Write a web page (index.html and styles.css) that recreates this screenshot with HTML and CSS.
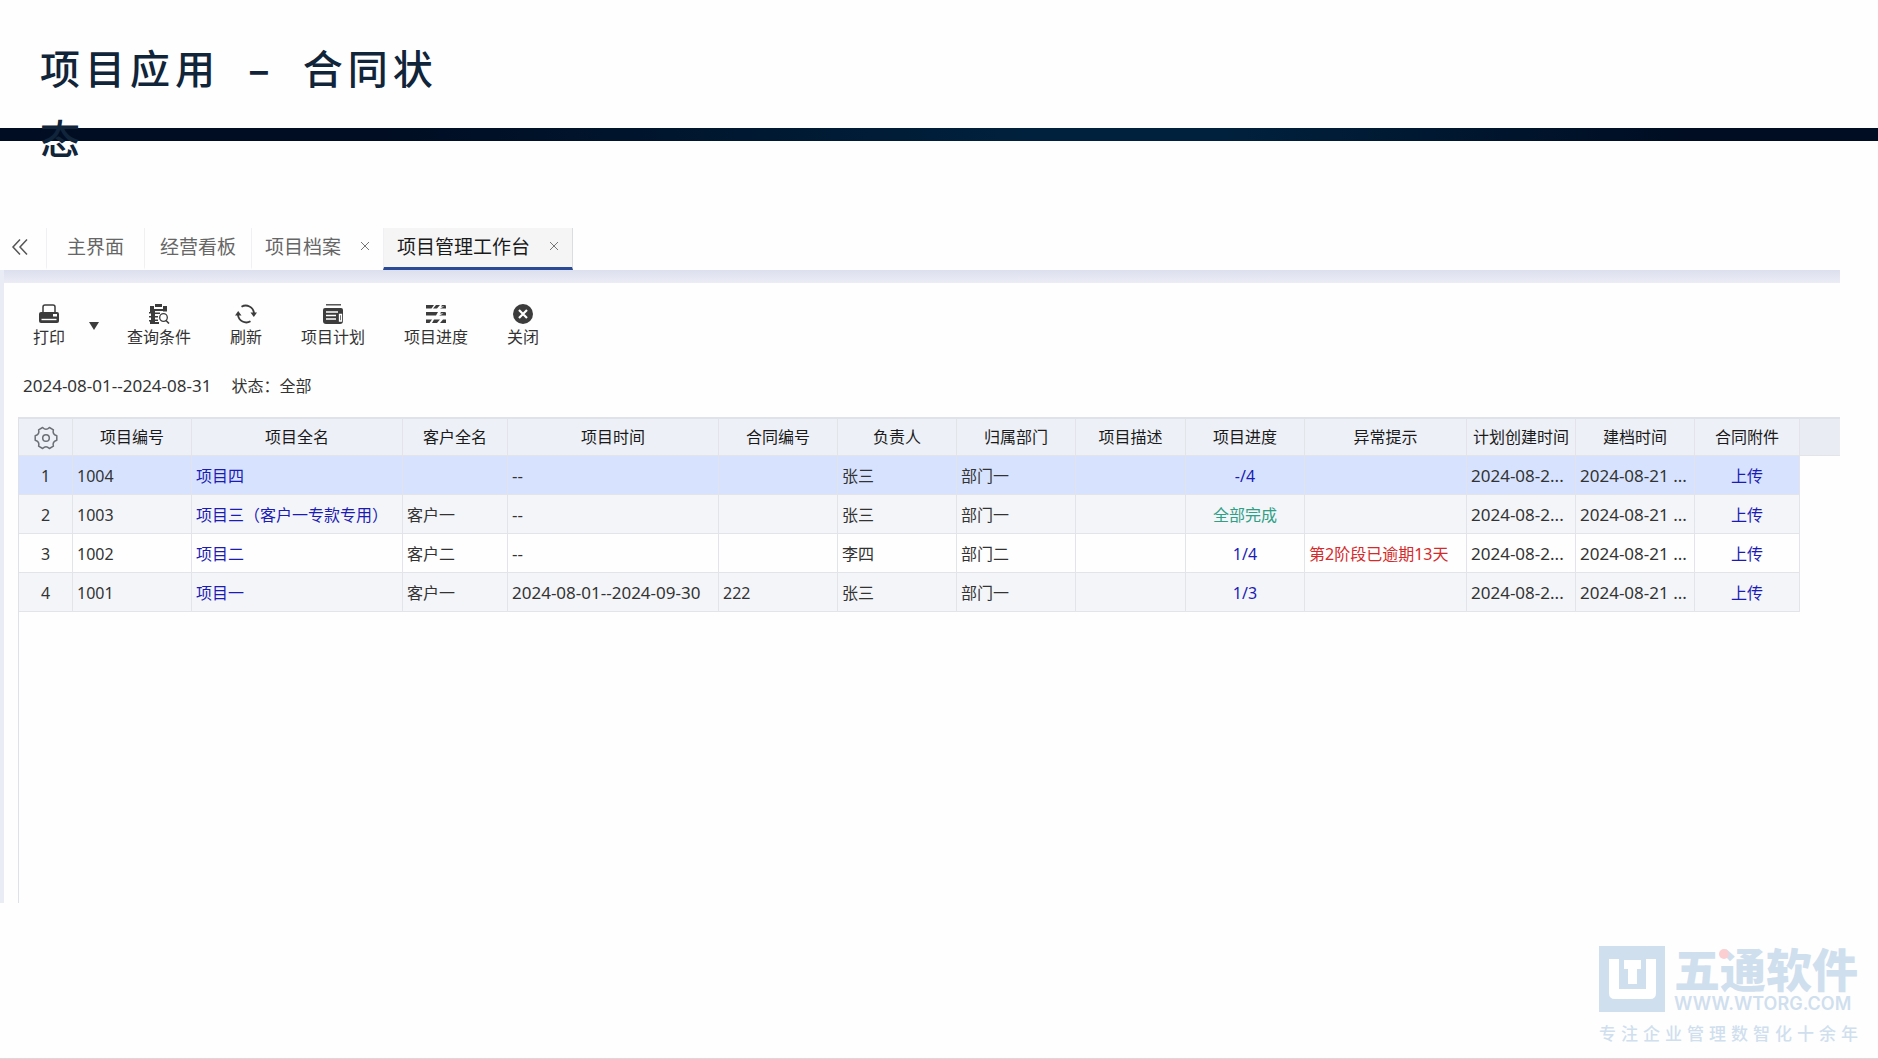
FILE: index.html
```html
<!DOCTYPE html>
<html lang="zh-CN">
<head>
    <meta charset="UTF-8">
    <meta name="viewport" content="width=device-width, initial-scale=1.0">
    <title>项目应用 – 合同状态</title>
    <link rel="stylesheet" href="styles.css">
</head>
<body>
    <header class="slide-header">
        <h1>项目应用 <span class="dash">–</span> 合同状态</h1>
    </header>
    <div class="divider"></div>

    <main class="app">
        <nav class="tabs">
            <button type="button" class="collapse" aria-label="收起">
                <svg width="18" height="18" viewBox="0 0 18 18" fill="none" stroke="#555" stroke-width="1.500"><path d="M9 1.500 2 9l7 7.500M16 1.500 9 9l7 7.500"/></svg>
            </button>
            <div class="tab home"><a href="#">主界面</a></div>
            <div class="tab board"><a href="#">经营看板</a></div>
            <div class="tab">
                <a href="#">项目档案</a>
                <button type="button" class="tab-close" aria-label="关闭项目档案"><svg width="10" height="10" viewBox="0 0 10 10" stroke="#777"><path d="M1 1l8 8M9 1 1 9"/></svg></button>
            </div>
            <div class="tab active">
                <a href="#">项目管理工作台</a>
                <button type="button" class="tab-close" aria-label="关闭项目管理工作台"><svg width="10" height="10" viewBox="0 0 10 10" stroke="#777"><path d="M1 1l8 8M9 1 1 9"/></svg></button>
            </div>
        </nav>

        <section class="panel">
            <div class="toolbar">
                <div class="print">
                    <button type="button" class="tool">
                        <svg width="22" height="20" viewBox="0 0 22 20"><path d="M5 9V3q0-2 2-2h8q2 0 2 2v6" fill="none" stroke="#3c3c3c" stroke-width="1.500"/><path d="M3 8h16q2 0 2 2v7q0 2-2 2H3q-2 0-2-2v-7q0-2 2-2z" fill="#3c3c3c"/><path d="M15 10h4v2.500h-4z" fill="#fff"/><path d="M3.500 15.500h15" stroke="#fff" stroke-width="1.400"/></svg>
                        打印
                    </button>
                    <button type="button" class="more" aria-label="更多打印选项"><svg width="10" height="8" viewBox="0 0 10 8"><path d="M0 0h10L5 8z" fill="#3c3c3c"/></svg></button>
                </div>
                <button type="button" class="tool">
                    <svg width="22" height="20" viewBox="0 0 22 20"><path d="M2 2h4v3h9V2h4v5.500h-4V7H7v1.500h5V10H7v2h3v1.500H7v2h3V17H7v1h4v2H2v-2.500H1V16h2v-2.500H1V12h2V9.500H1V8h1z" fill="#3c3c3c"/><path d="M7 0h7v3H7z" fill="#3c3c3c"/><circle cx="15.500" cy="13.500" r="3.800" fill="#fff" stroke="#3c3c3c" stroke-width="1.300"/><path d="M18 16.500l3 3" stroke="#3c3c3c" stroke-width="1.600"/></svg>
                    查询条件
                </button>
                <button type="button" class="tool">
                    <svg width="22" height="20" viewBox="0 0 22 20"><path d="M6.500 2.800A8.300 8.300 0 0 1 19 9M3 11A8.300 8.300 0 0 0 15.500 17.200" fill="none" stroke="#3c3c3c" stroke-width="1.900"/><path d="M15.500 8.500H22l-3.200 4.500zM0 11.500h6.500L3.200 7z" fill="#3c3c3c"/></svg>
                    刷新
                </button>
                <button type="button" class="tool">
                    <svg width="22" height="20" viewBox="0 0 22 20"><path d="M4 .800h15" stroke="#3c3c3c" stroke-width="1.300"/><path d="M3 4h16q2 0 2 2v11q0 3-3 3H4q-3 0-3-3V6q0-2 2-2z" fill="#3c3c3c"/><path d="M4 8h12M4 11.500h10M4 15h10M17.500 10.500h2v6.500h-2z" fill="none" stroke="#fff" stroke-width="1.300"/></svg>
                    项目计划
                </button>
                <button type="button" class="tool">
                    <svg width="22" height="20" viewBox="0 0 22 20" fill="#3c3c3c"><path d="M1 1h8L6.500 4.500H1zM11 1h4l-3 3.500H8zM17 1h4l-1 1.500h-4zM18 3l3-1v2.500h-6zM1 8h12l-2 3.500H1zM16 8h5l-2 1.500h-4zM14 11.500l7-3v3zM1 15.500h6l-2.500 3.500H1zM9 15.500h6l-3 3.500H7zM18 15.500h3V19h-6z"/></svg>
                    项目进度
                </button>
                <button type="button" class="tool">
                    <svg width="22" height="20" viewBox="0 0 22 20"><circle cx="11" cy="10" r="10" fill="#3c3c3c"/><path d="M7 6l8 8M15 6l-8 8" stroke="#fff" stroke-width="2.200"/></svg>
                    关闭
                </button>
            </div>

            <div class="filter">
                <span class="date">2024-08-01--2024-08-31</span>
                <span>状态：全部</span>
            </div>

            <div class="grid">
                <table>
                    <colgroup>
                        <col class="w-index"><col class="w-m"><col class="w-xl"><col class="w-s"><col class="w-xl">
                        <col class="w-m"><col class="w-m"><col class="w-m"><col class="w-desc"><col class="w-m">
                        <col class="w-l"><col class="w-plan"><col class="w-m"><col class="w-s"><col>
                    </colgroup>
                    <thead>
                        <tr>
                            <th>
                                <button type="button" class="gear" aria-label="列设置">
                                    <svg width="24" height="24" viewBox="0 0 24 24" fill="none" stroke="#6b6f76" stroke-width="1.500" stroke-linejoin="round"><path d="M8.600 1.500Q12 5.100 15.400 1.500L19.400 3.800Q18.100 8.400 22.800 9.800V14.200Q18.100 15.600 19.400 20.200L15.400 22.500Q12 18.900 8.600 22.500L4.600 20.200Q5.900 15.600 1.200 14.200V9.800Q5.900 8.400 4.600 3.800Z"/><circle cx="12" cy="12" r="3.300"/></svg>
                                </button>
                            </th>
                            <th>项目编号</th><th>项目全名</th><th>客户全名</th><th>项目时间</th>
                            <th>合同编号</th><th>负责人</th><th>归属部门</th><th>项目描述</th><th>项目进度</th>
                            <th>异常提示</th><th>计划创建时间</th><th>建档时间</th><th>合同附件</th><th class="rest"></th>
                        </tr>
                    </thead>
                    <tbody>
                        <tr class="selected">
                            <td class="center">1</td><td>1004</td><td><a href="#">项目四</a></td><td></td><td class="date">--</td>
                            <td></td><td>张三</td><td>部门一</td><td></td><td class="center"><a href="#">-/4</a></td>
                            <td></td><td class="date">2024-08-2...</td><td class="date">2024-08-21 ...</td><td class="center"><a href="#">上传</a></td><td class="rest"></td>
                        </tr>
                        <tr>
                            <td class="center">2</td><td>1003</td><td><a href="#">项目三（客户一专款专用）</a></td><td>客户一</td><td class="date">--</td>
                            <td></td><td>张三</td><td>部门一</td><td></td><td class="center done">全部完成</td>
                            <td></td><td class="date">2024-08-2...</td><td class="date">2024-08-21 ...</td><td class="center"><a href="#">上传</a></td><td class="rest"></td>
                        </tr>
                        <tr>
                            <td class="center">3</td><td>1002</td><td><a href="#">项目二</a></td><td>客户二</td><td class="date">--</td>
                            <td></td><td>李四</td><td>部门二</td><td></td><td class="center"><a href="#">1/4</a></td>
                            <td class="late">第2阶段已逾期13天</td><td class="date">2024-08-2...</td><td class="date">2024-08-21 ...</td><td class="center"><a href="#">上传</a></td><td class="rest"></td>
                        </tr>
                        <tr>
                            <td class="center">4</td><td>1001</td><td><a href="#">项目一</a></td><td>客户一</td><td class="date">2024-08-01--2024-09-30</td>
                            <td>222</td><td>张三</td><td>部门一</td><td></td><td class="center"><a href="#">1/3</a></td>
                            <td></td><td class="date">2024-08-2...</td><td class="date">2024-08-21 ...</td><td class="center"><a href="#">上传</a></td><td class="rest"></td>
                        </tr>
                    </tbody>
                </table>
            </div>
        </section>
    </main>

    <footer class="slide-footer">
        <div class="brand">
            <div class="brand-top">
                <svg width="66" height="66" viewBox="0 0 66 66"><path d="M0 0h66v66H0z" fill="#d0dfee"/><path d="M10 13h10v30h27V13h10v34q0 6-6 6H16q-6 0-6-6z" fill="#fff"/><path d="M25 14h17v9h-4v15h-9V23h-4z" fill="#fff"/></svg>
                <div class="brand-text">
                    <span class="brand-name">五通软件</span>
                    <span class="brand-url">WWW.WTORG.COM</span>
                </div>
            </div>
            <p class="slogan">专注企业管理数智化十余年</p>
        </div>
    </footer>
</body>
</html>
```
FILE: styles.css
```css
* {
    box-sizing: border-box;
}
body {
    margin: 0;
    min-height: 100vh;
    display: flex;
    flex-direction: column;
    background: #fefefe;
    border-bottom: 1px solid #d9d9d9;
    font-family: "Noto Sans", "Noto Sans CJK SC", sans-serif;
    font-size: 16px;
    color: #333;
}
a {
    color: #1c1cb4;
    text-decoration: none;
}
button {
    padding: 0;
    border: none;
    background: none;
    font: inherit;
    color: inherit;
    cursor: pointer;
}
svg {
    display: block;
}

/* title, wraps over the dark bar */
.slide-header {
    height: 128px;
    padding: 32px 40px 0;
}
h1 {
    position: relative;
    max-width: 420px;
    margin: 0;
    font-family: "Noto Sans CJK SC", sans-serif;
    font-size: 40px;
    font-weight: 500;
    line-height: 70px;
    letter-spacing: 5px;
    color: #10243a;
}
.dash {
    padding: 0 14px;
    font-weight: 700;
}
.divider {
    height: 13px;
    background: linear-gradient(90deg, #000d22 20%, #00213d 55%, #00213d 65%, #000d22 90%);
}

.app {
    flex: 1;
    display: flex;
    flex-direction: column;
    margin: 87px 38px 0 0;
}

/* tabs */
.tabs {
    display: flex;
    height: 42px;
    font-size: 19px;
}
.collapse {
    width: 46px;
    padding: 0 0 4px 11px;
}
.tab {
    display: flex;
    align-items: center;
    gap: 19px;
    padding: 0 13px 3px;
    border-left: 1px solid #f0f0f2;
    border-bottom: 3px solid transparent;
}
.tab.home {
    padding: 0 20px 3px;
}
.tab.board {
    padding: 0 15px 3px;
}
.tab a {
    color: #666;
}
.tab.active {
    background: #f5f5f6;
    border-right: 1px solid #dcdde2;
    border-bottom-color: #2a4a96;
}
.tab.active a {
    color: #1a1a1a;
}

.panel {
    flex: 1;
    display: flex;
    flex-direction: column;
    border-left: 4px solid #e9ecf5;
    background: linear-gradient(#dcdfee, #ebecf5 13px, transparent 13px);
    padding: 34px 0 0 14px;
}

/* toolbar */
.toolbar {
    display: flex;
    gap: 39px;
    padding-left: 15px;
}
.print {
    display: flex;
    align-items: center;
    gap: 24px;
    margin-right: -11px;
}
.tool {
    display: flex;
    flex-direction: column;
    align-items: center;
    gap: 3px;
    line-height: 20px;
}

.filter {
    display: flex;
    gap: 20px;
    margin: 27px 0 19px;
    padding-left: 5px;
    line-height: 24px;
}
.date {
    font-size: 17px;
}

/* data grid */
.grid {
    flex: 1;
    border-left: 1px solid #dfe1e8;
}
table {
    width: 100%;
    table-layout: fixed;
    border-collapse: separate;
    border-spacing: 0;
}
.w-index { width: 54px; }
.w-s { width: 105px; }
.w-m { width: 119px; }
.w-l { width: 162px; }
.w-xl { width: 211px; }
.w-desc { width: 110px; }
.w-plan { width: 109px; }
th,
td {
    height: 39px;
    padding: 2px 0 0 4px;
    border-right: 1px solid #e2e4ea;
    border-bottom: 1px solid #e2e4ea;
    line-height: 24px;
    text-align: left;
    white-space: nowrap;
}
th {
    padding: 0;
    border-top: 2px solid #dfe2e8;
    background: #edf0f6;
    font-weight: 400;
    color: #1a1a1a;
    text-align: center;
}
th.rest {
    background: #e9ecf3;
    border-right: none;
}
tbody tr:nth-child(even) {
    background: #f3f5f9;
}
tbody .selected {
    background: #d7e3fe;
}
td.rest {
    background: #fefefe;
    border: none;
}
td.center {
    padding: 2px 0 0;
    text-align: center;
}
.done {
    color: #2fa084;
}
.late {
    color: #d42a2a;
}
.gear {
    vertical-align: middle;
}

/* company mark */
.slide-footer {
    display: flex;
    justify-content: flex-end;
    padding: 43px 15px 13px;
    color: #d0dfee;
}
.brand-top {
    display: flex;
    gap: 9px;
}
.brand-text {
    display: flex;
    flex-direction: column;
}
.brand-name {
    position: relative;
    font-family: "Noto Sans CJK SC", sans-serif;
    font-size: 46px;
    font-weight: 900;
    line-height: 43px;
}
.brand-name::after {
    content: "";
    position: absolute;
    top: 3px;
    left: 45px;
    width: 10px;
    height: 10px;
    border-radius: 50%;
    background: #fbcfd2;
}
.brand-url {
    font-family: Inter, sans-serif;
    font-size: 18px;
    font-weight: 600;
    line-height: 30px;
}
.slogan {
    margin: 2px 0 0;
    font-family: "Noto Sans CJK SC", sans-serif;
    font-size: 17px;
    font-weight: 500;
    line-height: 24px;
    letter-spacing: 5px;
}
```
